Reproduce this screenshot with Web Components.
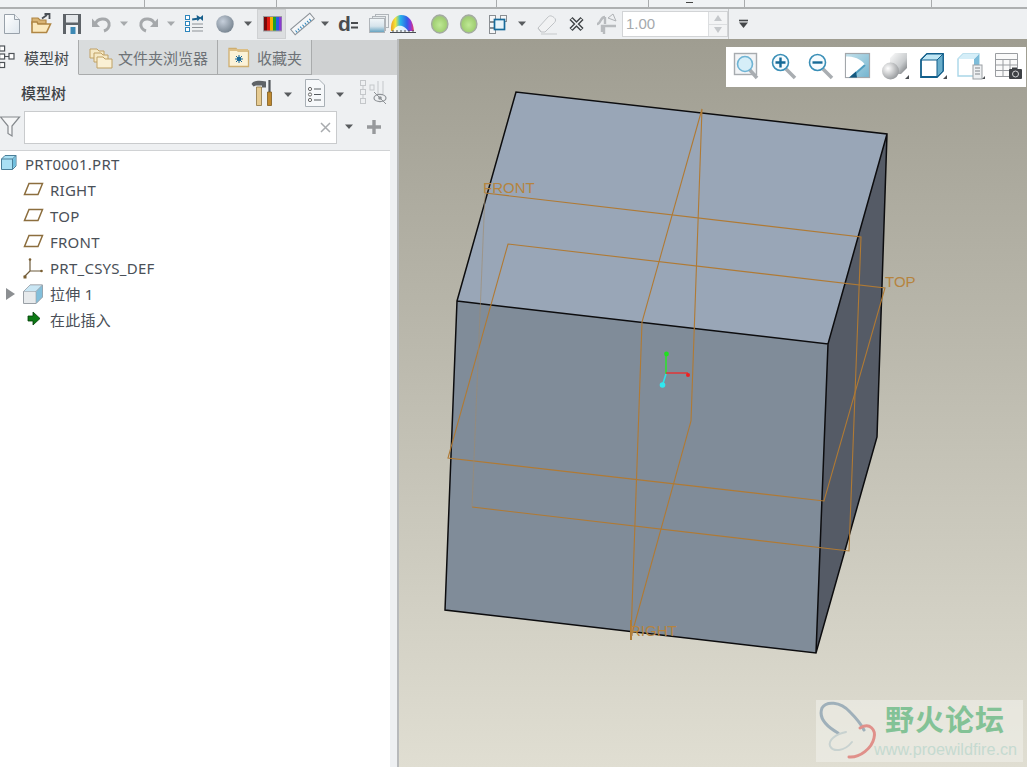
<!DOCTYPE html>
<html lang="zh"><head><meta charset="utf-8"><title>PRT0001</title>
<style>
html,body{margin:0;padding:0;height:100%;overflow:hidden;background:#eef0f2}
body{font-family:"Noto Sans","Noto Sans CJK SC",sans-serif}
</style></head><body>
<cad-app>
  <top-strip slot="strip"></top-strip>
  <tool-bar slot="bar">
    <tool-icon name="new" x="4" w="16"></tool-icon>
    <tool-icon name="open" ml="11" w="20"></tool-icon>
    <tool-icon name="save" ml="12" w="18"></tool-icon>
    <tool-icon name="undo" ml="11" w="19"></tool-icon>
    <tool-icon name="caretg" ml="9" w="8"></tool-icon>
    <tool-icon name="redo" ml="11" w="19"></tool-icon>
    <tool-icon name="caretg" ml="9" w="8"></tool-icon>
    <tool-icon name="regen" ml="10" w="19"></tool-icon>
    <tool-icon name="sphere" ml="12" w="18"></tool-icon>
    <tool-icon name="caret" ml="10" w="8"></tool-icon>
    <tool-icon name="color" ml="5" w="29" active></tool-icon>
    <tool-icon name="ruler" ml="6" w="21"></tool-icon>
    <tool-icon name="caret" ml="8" w="8"></tool-icon>
    <tool-icon name="deq" ml="10" w="19"></tool-icon>
    <tool-icon name="layers" ml="11" w="20"></tool-icon>
    <tool-icon name="rainbow" ml="1" w="26"></tool-icon>
    <tool-icon name="ball" ml="15" w="17"></tool-icon>
    <tool-icon name="ball" ml="12" w="18"></tool-icon>
    <tool-icon name="boxes" ml="11" w="19"></tool-icon>
    <tool-icon name="caret" ml="10" w="8"></tool-icon>
    <tool-icon name="eraser" ml="11" w="20"></tool-icon>
    <tool-icon name="cross" ml="12" w="15"></tool-icon>
    <tool-icon name="fork" ml="12" w="20"></tool-icon>
    <spin-box value="1.00"></spin-box>
    <tool-icon name="more" ml="11" w="9"></tool-icon>
  </tool-bar>
  <side-panel slot="side">
    <panel-tab slot="tabs" active icon="tree" iw="19" label="模型树" width="79" il="-1" tl="6"></panel-tab>
    <panel-tab slot="tabs" icon="folders" iw="24" label="文件夹浏览器" width="139" il="10" tl="5"></panel-tab>
    <panel-tab slot="tabs" icon="fav" iw="21" label="收藏夹" width="94" il="10" tl="8"></panel-tab>
    <tree-row icon="part" iw="15" il="1" tl="9">PRT0001.PRT</tree-row>
    <tree-row icon="plane" iw="20" il="23" tl="7">RIGHT</tree-row>
    <tree-row icon="plane" iw="20" il="23" tl="7">TOP</tree-row>
    <tree-row icon="plane" iw="20" il="23" tl="7">FRONT</tree-row>
    <tree-row icon="csys" iw="20" il="23" tl="7">PRT_CSYS_DEF</tree-row>
    <tree-row icon="extrude" iw="20" il="23" tl="7" arrow>拉伸 1</tree-row>
    <tree-row icon="insert" iw="20" il="23" tl="7">在此插入</tree-row>
  </side-panel>
  <cad-view slot="view">
    <view-tools slot="over">
      <tool-icon name="vfit" w="26" h="28"></tool-icon>
      <tool-icon name="vzin" ml="11" w="26" h="28"></tool-icon>
      <tool-icon name="vzout" ml="11" w="26" h="28"></tool-icon>
      <tool-icon name="vrefit" ml="11" w="26" h="28"></tool-icon>
      <tool-icon name="vshade" ml="11" w="27" h="28"></tool-icon>
      <tool-icon name="vcube" ml="11" w="27" h="28"></tool-icon>
      <tool-icon name="vdoc" ml="10" w="28" h="28"></tool-icon>
      <tool-icon name="vtable" ml="10" w="27" h="28"></tool-icon>
    </view-tools>
    <water-mark slot="over"></water-mark>
  </cad-view>
</cad-app>
<script>
const caret=(c)=>`<path d="M0 9.5H8L4 14Z" fill="${c}"/>`;
const ICONS={
 new:`<defs><linearGradient id="a" x1="0" y1="0" x2="1" y2="1"><stop offset="0" stop-color="#fff"/><stop offset="1" stop-color="#dfe7ee"/></linearGradient></defs><path d="M.5 2.5H10.5L15.5 7.5V21.5H.5Z" fill="url(#a)" stroke="#98a1aa"/><path d="M10.5 2.5V7.5H15.5" fill="#eef1f4" stroke="#98a1aa"/>`,
 open:`<path d="M1 6H7L9 8H15V12H1Z" fill="#d9b474" stroke="#b08644" stroke-width="1.2"/><path d="M1 20V10H6L7 12H19.5L15.5 20.5H1Z" fill="#fbe9bd" stroke="#b08644" stroke-width="1.6"/><path d="M11 6.5L16 3M13.5 2H18.5V7" fill="none" stroke="#4a4f55" stroke-width="1.8"/>`,
 save:`<path d="M0 2H18V22H0Z" fill="#5e6368"/><rect x="3" y="3" width="12" height="7.5" fill="#e4e7ea"/><rect x="3" y="13" width="12" height="9" fill="#f0f2f4"/><rect x="7.5" y="15" width="5" height="7" fill="#3c88b4"/>`,
 undo:`<path d="M3.5 12C5 6 15 5 17 11C18 15 15 18 12 19" fill="none" stroke="#a5a8ab" stroke-width="3"/><path d="M0 6.5V15H8Z" fill="#a5a8ab"/>`,
 redo:`<path d="M15.5 12C14 6 4 5 2 11C1 15 4 18 7 19" fill="none" stroke="#a5a8ab" stroke-width="3"/><path d="M19 6.5V15H11Z" fill="#a5a8ab"/>`,
 caret:caret('#585b5e'),caretg:caret('#a6a9ac'),
 more:`<path d="M0 8.5H9" stroke="#444749" stroke-width="1.6"/><path d="M0 10.5H9L4.5 16Z" fill="#444749"/>`,
 regen:`<g fill="#fff" stroke="#2d86bd"><rect x=".5" y="3.5" width="4" height="4"/><rect x=".5" y="9.5" width="4" height="4"/><rect x=".5" y="15.5" width="4" height="4"/></g><path d="M7 12H18M7 15.5H18M7 19H18" stroke="#8d9297"/><path d="M7 6H12V3L16 6.5L12 9.5V8H7Z" fill="#175f8c" transform="rotate(-8 11 6)"/><path d="M18 3L14.5 6L18 9Z" fill="#175f8c"/>`,
 sphere:`<defs><radialGradient id="a" cx=".38" cy=".35" r=".7"><stop offset="0" stop-color="#c6cfdb"/><stop offset="1" stop-color="#76838f"/></radialGradient></defs><circle cx="9" cy="12" r="8.7" fill="url(#a)"/>`,
 color:`<rect x="6" y="4" width="19" height="15.5" fill="#9a9da0"/><g><rect x="7" y="5" width="3" height="13.5" fill="#7a0a0a"/><rect x="10" y="5" width="3" height="13.5" fill="#e21a10"/><rect x="13" y="5" width="3" height="13.5" fill="#f4b400"/><rect x="16" y="5" width="3" height="13.5" fill="#20a028"/><rect x="19" y="5" width="3" height="13.5" fill="#2a5de0"/><rect x="22" y="5" width="2.5" height="13.5" fill="#8a3ad0"/></g>`,
 ruler:`<g transform="rotate(-40 10.5 12)"><rect x="-2" y="8.5" width="25" height="7" fill="#f4f6f8" stroke="#8c9298"/><path d="M1 15V12.5M4 15V12.5M7 15V12.5M10 15V12.5M13 15V12.5M16 15V12.5M19 15V12.5" stroke="#2d86bd"/></g>`,
 deq:`<text x="-1" y="19" font-family="Liberation Sans" font-weight="700" font-size="21" fill="#4a4c4f">d</text><path d="M12 11H19M12 15.5H19" stroke="#4a4c4f" stroke-width="2"/>`,
 layers:`<defs><linearGradient id="a" x1="0" y1="0" x2="0" y2="1"><stop offset="0" stop-color="#f2f6f9"/><stop offset=".55" stop-color="#d6e4ec"/><stop offset="1" stop-color="#5f9fbe"/></linearGradient></defs><rect x="6.5" y="2.5" width="13" height="13" fill="#eef1f3" stroke="#b0b5ba"/><rect x="3.5" y="4.5" width="13" height="14" fill="#e4e9ec" stroke="#b0b5ba"/><rect x=".5" y="6.5" width="15" height="14" fill="url(#a)" stroke="#b0b5ba"/>`,
 rainbow:`<defs><linearGradient id="a" x1="0" y1="0" x2="1" y2="0"><stop offset="0" stop-color="#f0a020"/><stop offset=".2" stop-color="#f2e53a"/><stop offset=".4" stop-color="#28b8e8"/><stop offset=".7" stop-color="#3060e8"/><stop offset=".85" stop-color="#8a38d8"/><stop offset="1" stop-color="#ee3a5a"/></linearGradient></defs><path d="M1 19C0 8 6 3 11 3C19 3 23 9 24 19Z" fill="url(#a)"/><path d="M3 19C5 14 9 13 12 14C15 15 17 17 18 19Z" fill="#fff" opacity=".85"/><path d="M0 20.5H26" stroke="#4a4f55"/><path d="M3 20V18M7 20V18M11 20V18M15 20V18M19 20V18M23 20V18" stroke="#4a4f55"/>`,
 ball:`<defs><radialGradient id="a" cx=".5" cy=".55" r=".55"><stop offset="0" stop-color="#bfe995"/><stop offset=".72" stop-color="#a2d074"/><stop offset="1" stop-color="#a3b694"/></radialGradient></defs><ellipse cx="8.75" cy="12" rx="8.2" ry="9" fill="url(#a)" stroke="#a3aaa0" stroke-width="1.3"/>`,
 boxes:`<g fill="#f5f6f7" stroke="#8a8e92"><rect x=".5" y="3.5" width="6" height="6"/><rect x="11.5" y="3.5" width="6" height="6"/><rect x=".5" y="10.5" width="6" height="5"/><rect x=".5" y="16.5" width="6" height="5"/></g><rect x="5.5" y="7.5" width="10" height="10" fill="#e8f4fa" stroke="#176a9a" stroke-width="1.7"/>`,
 eraser:`<path d="M1 16L11 5C13 3 15 4 17 5.5C19 7 19 9 17.5 10.5L8 20H4Z" fill="#f1f2f3" stroke="#c0c3c6"/><path d="M1 16L4 20" stroke="#c0c3c6"/><path d="M4 22H20" stroke="#c6c9cb"/>`,
 cross:`<path d="M2 6.5L13 17.5M13 6.5L2 17.5" stroke="#3f4346" stroke-width="4.4"/><path d="M2.5 7L12.5 17M12.5 7L2.5 17" stroke="#eef0f2" stroke-width="1.6"/>`,
 fork:`<path d="M1 12C5 12 4 5 9 5M9 5V12M6 20V14H20M8 22V14" fill="none" stroke="#b8bbbe" stroke-width="2.4"/><path d="M12 6L17 2L20 9Z" fill="#eef0f2" stroke="#b0b3b6"/>`,
 tree:`<g fill="#fff" stroke="#4f5459" stroke-width="1.2"><rect x=".6" y="1" width="5" height="5"/><rect x=".6" y="9" width="5" height="5"/><rect x=".6" y="17.5" width="5" height="5"/><rect x="10" y="8.5" width="5" height="5.5"/></g><path d="M5.5 11.5H10" stroke="#4f5459"/>`,
 folders:`<g fill="#f6e9c6" stroke="#c0a165"><path d="M1 4H8L10 6H15V13H1Z"/><path d="M5 8H12L14 10H19V17H5Z"/><path d="M8 12H14L16 14H23V23H8Z" fill="#faf0d4"/></g>`,
 fav:`<path d="M1 3.5H8L10 6H20.5V21.5H1Z" fill="#fbf2d8" stroke="#cfae70" stroke-width="1.3"/><path d="M1 5H20" stroke="#dcbf86" stroke-width="2"/><circle cx="11" cy="14" r="2.2" fill="#1a6a9c"/><path d="M11 10V18M7 14H15M8 11L14 17M14 11L8 17" stroke="#1a6a9c"/>`,
 hammer:`<path d="M.5 5C2 2 7 1 15 2.5V8.5H11V6.5H5L2.5 7.5Z" fill="#5f6367"/><path d="M5.5 8H10.5V26.5H5.5Z" fill="#e6cb92" stroke="#8d7440" stroke-width=".8"/><path d="M18.5 1V13" stroke="#54585c" stroke-width="2.2"/><path d="M16.5 13H20.5V26.5H16.5Z" fill="#c08a30" stroke="#7d5a1e" stroke-width=".8"/>`,
 list:`<path d="M.5 .5H14L19.5 6V27.5H.5Z" fill="#f6f8fa" stroke="#a9b0b6"/><g fill="#fff" stroke="#666"><circle cx="5" cy="10" r="1.6"/><circle cx="5" cy="15.5" r="1.6"/><circle cx="5" cy="21" r="1.6"/></g><path d="M9 10H16M9 15.5H16M9 21H16" stroke="#555a5f" stroke-width="1.2"/>`,
 hide:`<g fill="none" stroke="#c4c7ca"><rect x=".5" y="1.5" width="5" height="5"/><rect x=".5" y="10.5" width="5" height="5"/><rect x=".5" y="19.5" width="5" height="5"/><rect x="10" y="6" width="4" height="5"/><path d="M3 6.5V10.5M3 15.5V19.5M18 2V20M23 2V15"/></g><ellipse cx="20" cy="19" rx="6" ry="3.6" fill="#eef0f2" stroke="#8f9397" stroke-width="1.2"/><circle cx="20" cy="19" r="1.8" fill="#8f9397"/><path d="M14 13L26 25" stroke="#8f9397"/>`,
 funnel:`<path d="M.5 2H19.5L12 11V21L8 18.5V11Z" fill="#f5f6f7" stroke="#85898d" stroke-width="1.2"/>`,
 x:`<path d="M1 1L10 10M10 1L1 10" stroke="#a8abae" stroke-width="1.5"/>`,
 plus:`<path d="M7 0V14M0 7H14" stroke="#97999c" stroke-width="3.4"/>`,
 arrow:`<path d="M0 0L9 6L0 12Z" fill="#8c8f92"/>`,
 part:`<path d="M.5 5L4 1.5H15V12L11.5 15.5H.5Z" fill="#a9e0f4" stroke="#4b7f99"/><path d="M.5 5H11.5V15.5M11.5 5L15 1.5" fill="none" stroke="#4b7f99"/><path d="M12 5.5L14.5 3V11.5L12 14Z" fill="#6fc0e0"/>`,
 plane:`<path d="M6 3.5H19.5L15 14.5H1.5Z" fill="none" stroke="#8c6e3e" stroke-width="1.5"/>`,
 csys:`<path d="M7 1V13M7 13H19M7 13L1 19" stroke="#6d5a3a" stroke-width="1.2" fill="none"/><circle cx="7" cy="1.5" r="1.3" fill="#7a5f32"/><circle cx="18.5" cy="13" r="1.3" fill="#7a5f32"/><rect x=".5" y="17.5" width="3" height="3" fill="#7a5f32"/>`,
 extrude:`<path d="M.5 7.5L7 1H19.5V13L13 19.5H.5Z" fill="#e7eaec" stroke="#9aa0a6"/><path d="M7 1H19.5L13 7.5H.5Z" fill="#c9e6f4" stroke="#9aa0a6" stroke-width=".6"/><path d="M13 7.5L19.5 1V13L13 19.5Z" fill="#82bfdb" stroke="#9aa0a6" stroke-width=".6"/>`,
 insert:`<path d="M5 6H10V2L17 8.5L10 15V11H5Z" fill="#0c7a14" stroke="#033c08" stroke-width=".8"/>`,
 vfit:`<rect x=".5" y=".5" width="22" height="21" fill="#f2f4f6" stroke="#a7abaf" stroke-width="1.4"/><path d="M15 16L23 25" stroke="#a9adb1" stroke-width="3.5"/><circle cx="11" cy="11" r="7.5" fill="#d6eef8" stroke="#6fb4d4" stroke-width="1.6"/>`,
 vzin:`<path d="M15 16L24 25" stroke="#a9adb1" stroke-width="3.5"/><circle cx="9.5" cy="9.5" r="8" fill="#f5fbfe" stroke="#3a8fb7" stroke-width="1.6"/><path d="M9.5 4.5V14.5M4.5 9.5H14.5" stroke="#166a97" stroke-width="2.4"/>`,
 vzout:`<path d="M15 16L24 25" stroke="#a9adb1" stroke-width="3.5"/><circle cx="9.5" cy="9.5" r="8" fill="#f5fbfe" stroke="#3a8fb7" stroke-width="1.6"/><path d="M4.5 9.5H14.5" stroke="#166a97" stroke-width="2.4"/>`,
 vrefit:`<defs><linearGradient id="a" x1="0" y1="0" x2="1" y2="1"><stop offset="0" stop-color="#c4e2ec"/><stop offset="1" stop-color="#74b4cf"/></linearGradient></defs><rect x=".5" y=".5" width="24" height="24" fill="url(#a)" stroke="#a3a7ab" stroke-width="1.2"/><path d="M1 3.5H3C12 4 18 8 20 12L7 24H1Z" fill="#fff"/><path d="M7 23.5L20 12" stroke="#4d9cbf" stroke-width="2"/><path d="M4 24.5L11 18.5L12 24.5Z" fill="#14587f"/>`,
 vshade:`<defs><radialGradient id="a" cx=".35" cy=".35" r=".75"><stop offset="0" stop-color="#fff"/><stop offset="1" stop-color="#8f9295"/></radialGradient><linearGradient id="b" x1="0" y1="0" x2="1" y2="1"><stop offset="0" stop-color="#fdfdfd"/><stop offset=".6" stop-color="#c8cbcd"/><stop offset="1" stop-color="#6f7275"/></linearGradient></defs><path d="M8 5L13 0H25V15L19 21H8Z" fill="url(#b)"/><circle cx="8.5" cy="18" r="8.5" fill="url(#a)"/><path d="M23 26H27V22Z" fill="#4a4e52"/>`,
 vcube:`<path d="M1 7L7 1H23V18L17 24H1Z" fill="#fff" stroke="#125f8b" stroke-width="1.8"/><path d="M1 7H17L23 1H7Z" fill="#bfe6f4" stroke="#125f8b" stroke-width="1"/><path d="M17 7L23 1V18L17 24Z" fill="#6aaecb" stroke="#125f8b" stroke-width="1"/><path d="M23 26H27V22Z" fill="#4a4e52"/>`,
 vdoc:`<path d="M1 6L6 1H22V18L17 23H1Z" fill="#fff" stroke="#a9d6e8" stroke-width="1.4"/><path d="M17 6L22 1V18L17 23Z" fill="#7dbcd9"/><path d="M1 6H17L22 1H6Z" fill="#d5eef8"/><rect x="16" y="12" width="9" height="14" fill="#eef0f2" stroke="#9ba0a4"/><path d="M18 15H23M18 18H23M18 21H23" stroke="#80858a"/><path d="M25 26H28V23Z" fill="#4a4e52"/>`,
 vtable:`<path d="M.5 .5H22.5V23.5H.5ZM.5 6.5H22.5M.5 12H22.5M.5 17.5H22.5M8 6.5V23.5M15 6.5V23.5" fill="#fafafa" stroke="#9a9da1"/><rect x="14" y="16" width="13" height="10" rx="1" fill="#3e4145"/><rect x="17" y="14.5" width="5" height="3" fill="#3e4145"/><circle cx="20.5" cy="21" r="3" fill="#3e4145" stroke="#d4d6d8"/>`
};
function def(name,css,html){
 customElements.define(name,class extends HTMLElement{
  connectedCallback(){ if(this.shadowRoot) return;
   const r=this.attachShadow({mode:'open'});
   r.innerHTML=`<style>${css}</style>`+(typeof html==='function'?html(this):html);
  }
 });
}
const svg=(n,w,h)=>`<svg width="${w}" height="${h}" viewBox="0 0 ${w} ${h}" style="display:block;overflow:visible">${ICONS[n]}</svg>`;
def('cad-app',`:host{display:grid;grid-template-rows:9px 30px 728px;grid-template-columns:399px 628px;width:1027px;height:767px;overflow:hidden}
 ::slotted([slot=strip]),::slotted([slot=bar]){grid-column:1/3}`,
 `<slot name="strip"></slot><slot name="bar"></slot><slot name="side"></slot><slot name="view"></slot>`);
def('top-strip',`:host{display:flex;height:9px;box-sizing:border-box;border-bottom:2px solid #aeb0b1;background:#f0f2f4}
 i{display:block;width:1px;height:7px;background:#a9abad;flex:none}`,
 ()=>[144,132,220,152,96,187].reduce((s,g,idx)=>s+`<i style="margin-left:${g-(idx?1:0)}px"></i>`,'')+`<i style="margin-left:-246px;margin-top:2px;width:7px;height:1px;background:#444"></i>`);
def('tool-bar',`:host{display:flex;align-items:center;height:30px;background:#eef0f2;box-sizing:border-box}`,`<slot></slot>`);
def('tool-icon',`:host{display:flex;align-items:center;flex:none}
 :host([active]){background:#dcdee0;height:30px;box-shadow:inset 0 0 0 1px #cfd1d3}`,
 t=>{const w=+t.getAttribute('w'),h=+(t.getAttribute('h')||24),ml=t.getAttribute('ml')||t.getAttribute('x')||0;t.style.marginLeft=ml+'px';return svg(t.getAttribute('name'),w,h)});
def('spin-box',`:host{display:flex;flex:none;margin-left:6px;width:106px;height:26px;box-sizing:border-box;background:#fff;border:1px solid #d2d4d6;font:15px/24px "Liberation Sans",sans-serif;color:#a5a9ad;position:relative}
 .v{flex:1;padding-left:3px}
 .b{width:18px;border-left:1px solid #dcdee0;display:flex;flex-direction:column}
 .b span{flex:1;display:flex;align-items:center;justify-content:center;background:#f3f4f5}
 .b span+span{border-top:1px solid #dcdee0}
 :host::after{content:"";position:absolute;right:-2px;top:-3px;bottom:-3px;width:1px;background:#c6c8ca}`,
 t=>`<div class="v">${t.getAttribute('value')}</div><div class="b"><span><svg width="8" height="6"><path d="M4 0L8 6H0Z" fill="#c5c8cb"/></svg></span><span><svg width="8" height="6"><path d="M4 6L8 0H0Z" fill="#c5c8cb"/></svg></span></div>`);
def('side-panel',`:host{display:flex;flex-direction:column;background:#eef0f2;width:399px;height:728px;box-sizing:border-box;padding-top:1px;border-right:2px solid #b8babb}
 .tabs{display:flex;height:35px;background:#cfd1d2;flex:none}
 .head{height:35px;display:flex;align-items:center;flex:none;font:15px "Noto Sans CJK SC",sans-serif;font-weight:500;color:#3e4246}
 .head b{font-weight:500;margin-left:21px;margin-right:185px}
 .head svg{flex:none}
 .search{height:34px;display:flex;align-items:center;flex:none}
 .in{width:313px;height:33px;box-sizing:border-box;margin-left:4px;background:#fff;border:1px solid #c9cbcd;display:flex;align-items:center;justify-content:flex-end;padding-right:5px}
 .tree{flex:1;margin-top:6px;margin-right:7px;background:#fff;border-top:1px solid #d0d2d4}
 .dn{margin-top:4px}`,
 ()=>`<div class="tabs"><slot name="tabs"></slot></div>
 <div class="head"><b>模型树</b>${svg('hammer',21,28)}<span class="dn" style="margin-left:12px">${svg('caret',8,24)}</span><span style="margin-left:13px">${svg('list',20,28)}</span><span class="dn" style="margin-left:11px">${svg('caret',8,24)}</span><span style="margin-left:16px">${svg('hide',27,28)}</span></div>
 <div class="search">${svg('funnel',20,24)}<div class="in">${svg('x',11,11)}</div><span style="margin-left:8px">${svg('caret',8,24)}</span><span style="margin-left:14px">${svg('plus',14,14)}</span></div>
 <div class="tree"><slot></slot></div>`);
def('panel-tab',`:host{display:flex;align-items:center;box-sizing:border-box;height:35px;background:#d9dcdd;border-right:1px solid #a9abac;border-bottom:1px solid #a9abac;font:15px "Noto Sans CJK SC",sans-serif;color:#6d7276;flex:none;white-space:nowrap}
 :host([active]){background:#eef0f2;border-bottom-color:#eef0f2;color:#44484c}`,
 t=>{t.style.width=t.getAttribute('width')+'px';const iw=+t.getAttribute('iw');return `<span style="margin-left:${t.getAttribute('il')}px">${svg(t.getAttribute('icon'),iw,24)}</span><span style="margin-left:${t.getAttribute('tl')}px">${t.getAttribute('label')}</span>`});
def('tree-row',`:host{display:flex;align-items:center;height:26px;font:15px/20px "Noto Sans","Noto Sans CJK SC",sans-serif;letter-spacing:.25px;color:#4a5058;position:relative;white-space:nowrap}
 .a{position:absolute;left:6px;top:7px}
 .l{padding-bottom:1px}`,
 t=>{const iw=+t.getAttribute('iw');return `${t.hasAttribute('arrow')?`<span class="a">${svg('arrow',9,12)}</span>`:''}<span style="margin-left:${t.getAttribute('il')}px">${svg(t.getAttribute('icon'),iw,20)}</span><span class="l" style="margin-left:${t.getAttribute('tl')}px"><slot></slot></span>`});
def('cad-view',`:host{display:block;position:relative;width:628px;height:728px;overflow:hidden;background:linear-gradient(#9f9d91,#e0ded2)}
 svg{display:block}
 text{font:15px "Liberation Sans",sans-serif;fill:#b5843f}`,
 `<svg width="628" height="728" viewBox="399 39 628 728">
  <path d="M516 92L887 134L828 344L457 301Z" fill="#99a6b7"/>
  <path d="M457 301L828 344L816 653L445 610Z" fill="#808c99"/>
  <path d="M887 134L828 344L816 653L877 437Z" fill="#555b66"/>
  <path d="M457 301L516 92L887 134L877 437L816 653L445 610ZM457 301L828 344L887 134M828 344L816 653" fill="none" stroke="#0c0c0e" stroke-width="1.5"/>
  <g fill="none" stroke="#b07a34" stroke-width="1.1">
   <path d="M485 193L861 237L849 551L472 507"/>
   <path d="M508 244L885 288L824 501L448 458Z"/>
   <path d="M702 109L691 421L631 637L642 322Z"/>
  </g>
  <path d="M485 193L472 507" fill="none" stroke="#a08a6a" stroke-opacity=".6"/>
  <path d="M631 620V640" stroke="#b07a34" stroke-width="2"/>
  <text x="483" y="193">FRONT</text><text x="885" y="287">TOP</text><text x="630" y="636">RIGHT</text>
  <path d="M666 374V354" stroke="#30e030" stroke-width="1.6"/><circle cx="666.5" cy="354" r="2.4" fill="#20e020"/>
  <path d="M666 373H688" stroke="#e83030" stroke-width="1.4"/><circle cx="688" cy="375" r="2" fill="#f02020"/>
  <path d="M666 374L662.5 385" stroke="#30e0e8" stroke-width="1.6"/><circle cx="662.5" cy="385" r="2.8" fill="#30e8f0"/>
 </svg><slot name="over"></slot>`);
def('view-tools',`:host{position:absolute;left:327px;top:8px;width:300px;height:40px;background:#fff;display:flex;align-items:center;padding-left:8px;box-sizing:border-box}`,`<slot></slot>`);
def('water-mark',`:host{position:absolute;left:417px;top:661px;width:207px;height:62px;background:rgba(240,240,234,.6)}
 .t{position:absolute;left:69px;top:0;font:700 29px/37px "Noto Sans CJK SC",sans-serif;color:#83c296;letter-spacing:1px;white-space:nowrap}
 .u{position:absolute;left:58px;top:38px;font:16.2px/22px "Liberation Sans",sans-serif;color:#c5dad0;white-space:nowrap}
 svg{position:absolute;left:0;top:0}`,
 `<svg width="62" height="62" viewBox="0 0 62 62"><g fill="none" stroke-linecap="round"><path d="M6 8C10 1 24 1 34 12C42 20 46 26 48 30M6 8C3 16 8 25 22 33" stroke="#9fb0ba" stroke-width="3"/><path d="M44 28C54 22 60 30 58 38C56 48 44 58 33 57" stroke="#e0908a" stroke-width="3"/><path d="M30 32C20 34 12 40 14 46C17 52 28 52 36 42" stroke="#c8d2d0" stroke-width="2"/></g></svg><div class="t">野火论坛</div><div class="u">www.proewildfire.cn</div>`);
</script>
</body></html>
